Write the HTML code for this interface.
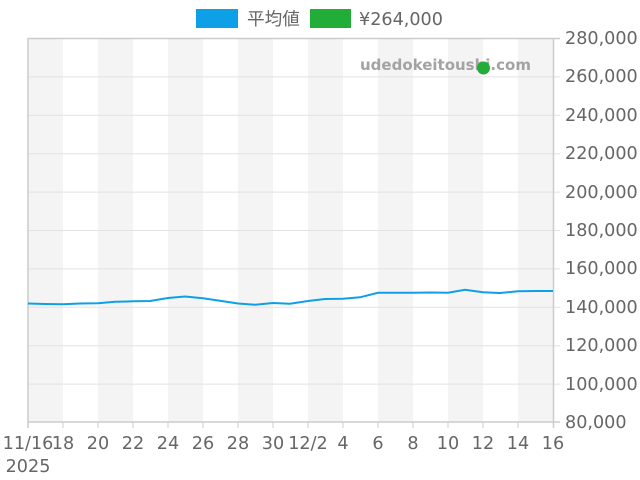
<!DOCTYPE html>
<html><head><meta charset="utf-8"><style>
html,body{margin:0;padding:0;background:#fff;width:640px;height:480px;overflow:hidden}
text{font-family:"DejaVu Sans","Liberation Sans","Noto Sans CJK JP",sans-serif;fill:#666;font-size:17.6px}
</style></head><body>
<svg width="640" height="480" xmlns="http://www.w3.org/2000/svg">
<g fill="#f4f4f4">
<rect x="28" y="38" width="35" height="384"/><rect x="98" y="38" width="35" height="384"/>
<rect x="168" y="38" width="35" height="384"/><rect x="238" y="38" width="35" height="384"/>
<rect x="308" y="38" width="35" height="384"/><rect x="378" y="38" width="35" height="384"/>
<rect x="448" y="38" width="35" height="384"/><rect x="518" y="38" width="35" height="384"/>
</g>
<g stroke="#e2e2e2" stroke-width="1">
<line x1="28" x2="560" y1="76.9" y2="76.9"/><line x1="28" x2="560" y1="115.3" y2="115.3"/>
<line x1="28" x2="560" y1="153.7" y2="153.7"/><line x1="28" x2="560" y1="192.1" y2="192.1"/>
<line x1="28" x2="560" y1="230.5" y2="230.5"/><line x1="28" x2="560" y1="268.9" y2="268.9"/>
<line x1="28" x2="560" y1="307.3" y2="307.3"/><line x1="28" x2="560" y1="345.7" y2="345.7"/>
<line x1="28" x2="560" y1="384.1" y2="384.1"/>
</g>
<g stroke="#ccc" stroke-width="1.5" fill="none">
<line x1="28" x2="560" y1="38.5" y2="38.5"/>
<line x1="28" x2="560" y1="422" y2="422"/>
<line x1="28" x2="28" y1="38" y2="428"/>
<line x1="553.5" x2="553.5" y1="38" y2="428"/>
</g>
<g stroke="#ccc" stroke-width="1">
<line x1="63" x2="63" y1="422" y2="428"/><line x1="98" x2="98" y1="422" y2="428"/><line x1="133" x2="133" y1="422" y2="428"/>
<line x1="168" x2="168" y1="422" y2="428"/><line x1="203" x2="203" y1="422" y2="428"/><line x1="238" x2="238" y1="422" y2="428"/>
<line x1="273" x2="273" y1="422" y2="428"/><line x1="308" x2="308" y1="422" y2="428"/><line x1="343" x2="343" y1="422" y2="428"/>
<line x1="378" x2="378" y1="422" y2="428"/><line x1="413" x2="413" y1="422" y2="428"/><line x1="448" x2="448" y1="422" y2="428"/>
<line x1="483" x2="483" y1="422" y2="428"/><line x1="518" x2="518" y1="422" y2="428"/>
</g>
<polyline fill="none" stroke="#0ea0e6" stroke-width="2" points="28,303.5 45,304 63,304.3 80,303.5 98,303.3 115,301.8 133,301.3 150,301 168,298 185,296.5 203,298.3 220,300.8 238,303.5 255,304.7 273,303 290,303.7 308,301 325,299 343,298.8 360,297.3 378,292.8 395,292.8 413,292.8 430,292.5 448,292.7 465,289.8 483,292.2 500,293 518,291.3 535,291 553,291"/>
<text x="360" y="70" style="font-weight:bold;font-size:15px;fill:#a3a3a3">udedokeitoushi.com</text>
<circle cx="483.5" cy="68" r="6.5" fill="#22ad38"/>
<rect x="196" y="9" width="42" height="19" fill="#0ea0e6"/>
<text x="247" y="25">平均値</text>
<rect x="310" y="9" width="41" height="19" fill="#22ad38"/>
<text x="359" y="25">¥264,000</text>
<g>
<text x="565" y="44">280,000</text><text x="565" y="82">260,000</text><text x="565" y="121">240,000</text>
<text x="565" y="159">220,000</text><text x="565" y="198">200,000</text><text x="565" y="236">180,000</text>
<text x="565" y="274">160,000</text><text x="565" y="313">140,000</text><text x="565" y="351">120,000</text>
<text x="565" y="390">100,000</text><text x="565" y="428">80,000</text>
</g>
<g text-anchor="middle">
<text x="28" y="449">11/16</text><text x="63" y="449">18</text><text x="98" y="449">20</text><text x="133" y="449">22</text>
<text x="168" y="449">24</text><text x="203" y="449">26</text><text x="238" y="449">28</text><text x="273" y="449">30</text>
<text x="308" y="449">12/2</text><text x="343" y="449">4</text><text x="378" y="449">6</text><text x="413" y="449">8</text>
<text x="448" y="449">10</text><text x="483" y="449">12</text><text x="518" y="449">14</text><text x="553" y="449">16</text>
<text x="28" y="472">2025</text>
</g>
</svg>
</body></html>
